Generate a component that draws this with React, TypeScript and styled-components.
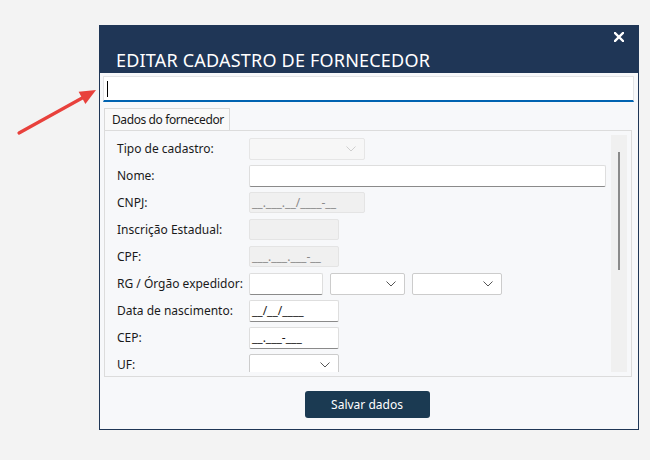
import React from "react";
import styled, { createGlobalStyle } from "styled-components";

const GlobalStyle = createGlobalStyle`
  html, body {
    margin: 0;
    padding: 0;
    background: #f3f3f3;
  }
  body {
    font-family: "Noto Sans", "Open Sans", sans-serif;
    color: #1a1a1a;
  }
`;

const Chevron = () => (
  <svg width="10" height="6" viewBox="0 0 10 6">
    <path d="M0.5 0.5 L5 5 L9.5 0.5" fill="none" stroke="currentColor" strokeWidth="1" />
  </svg>
);

const CloseIcon = () => (
  <svg width="10" height="10" viewBox="0 0 10 10">
    <path d="M1 1 L9 9 M9 1 L1 9" stroke="#ffffff" strokeWidth="2.4" strokeLinecap="square" />
  </svg>
);

const Select = ({ width, disabled }: { width: number; disabled?: boolean }) => (
  <SelectBox $width={width} $disabled={disabled}>
    <Chevron />
  </SelectBox>
);

const App = () => {
  return (
    <Page>
      <GlobalStyle />
      <Arrow width="110" height="150" viewBox="0 0 110 150">
        <line x1="19" y1="133" x2="84" y2="97" stroke="#e8413c" strokeWidth="3.2" strokeLinecap="round" />
        <polygon points="96,90 85.4,104 78.6,91.7" fill="#e8413c" />
      </Arrow>
      <Window>
        <Header>
          <Title>EDITAR CADASTRO DE FORNECEDOR</Title>
          <Close>
            <CloseIcon />
          </Close>
        </Header>
        <Body>
          <SearchInput>
            <Caret />
          </SearchInput>
          <TabBar>
            <Tab>Dados do fornecedor</Tab>
          </TabBar>
          <Panel>
            <ScrollArea>
              <Fields>
                <Row>
                  <Label>Tipo de cadastro:</Label>
                  <Select width={116} disabled />
                </Row>
                <Row>
                  <Label>Nome:</Label>
                  <TextBox $width={357} />
                </Row>
                <Row>
                  <Label>CNPJ:</Label>
                  <TextBox $width={116} $disabled>__.___.__/____-__</TextBox>
                </Row>
                <Row>
                  <Label>Inscrição Estadual:</Label>
                  <TextBox $width={90} $disabled />
                </Row>
                <Row>
                  <Label>CPF:</Label>
                  <TextBox $width={90} $disabled>___.___.___-__</TextBox>
                </Row>
                <Row>
                  <Label>RG / Órgão expedidor:</Label>
                  <Group>
                    <TextBox $width={74} />
                    <Select width={75} />
                    <Select width={90} />
                  </Group>
                </Row>
                <Row>
                  <Label>Data de nascimento:</Label>
                  <TextBox $width={90}>__/__/____</TextBox>
                </Row>
                <Row>
                  <Label>CEP:</Label>
                  <TextBox $width={90}>__.___-___</TextBox>
                </Row>
                <Row>
                  <Label>UF:</Label>
                  <Select width={90} />
                </Row>
              </Fields>
              <Scrollbar>
                <Thumb />
              </Scrollbar>
            </ScrollArea>
          </Panel>
          <Footer>
            <SaveButton>Salvar dados</SaveButton>
          </Footer>
        </Body>
      </Window>
    </Page>
  );
};

export default App;

const Page = styled.div`
  position: relative;
  width: 650px;
  height: 460px;
  padding: 25px 0 0 99px;
  box-sizing: border-box;
`;

const Arrow = styled.svg`
  position: absolute;
  left: 0;
  top: 0;
`;

const Window = styled.div`
  width: 540px;
  height: 405px;
  box-sizing: border-box;
  border: 1px solid #1f3656;
  border-top: none;
  background: #f7f8fa;
  display: flex;
  flex-direction: column;
`;

const Header = styled.div`
  position: relative;
  height: 48px;
  margin: 0 -1px;
  background: #1f3656;
  display: flex;
  align-items: flex-end;
  padding: 0 0 1px 17px;
  box-sizing: border-box;
`;

const Title = styled.div`
  color: #ffffff;
  font-size: 18px;
  line-height: 24px;
  letter-spacing: 0.2px;
`;

const Close = styled.div`
  position: absolute;
  top: 7px;
  right: 15px;
  display: flex;
`;

const Body = styled.div`
  flex: 1;
  display: flex;
  flex-direction: column;
  padding: 3px 4px 0 3px;
`;

const SearchInput = styled.div`
  height: 26px;
  box-sizing: border-box;
  background: #ffffff;
  border: 1px solid #e3e4e6;
  border-bottom: 2px solid #0063b1;
  display: flex;
  align-items: center;
  padding-left: 3px;
`;

const Caret = styled.div`
  width: 1px;
  height: 16px;
  background: #000000;
`;

const TabBar = styled.div`
  display: flex;
  margin: 6px 0 0 1px;
`;

const Tab = styled.div`
  width: 126px;
  height: 22px;
  box-sizing: border-box;
  padding: 0 0 0 7px;
  border: 1px solid #d9d9d9;
  border-bottom: none;
  background: #f9f9f9;
  font-size: 12px;
  line-height: 21px;
  letter-spacing: -0.4px;
  color: #1a1a1a;
  white-space: nowrap;
`;

const Panel = styled.div`
  height: 247px;
  margin: 0 2px 0 1px;
  box-sizing: border-box;
  border: 1px solid #dcdcdc;
  padding: 4px 4px 4px 3px;
`;

const ScrollArea = styled.div`
  height: 237px;
  display: flex;
  overflow: hidden;
`;

const Fields = styled.div`
  flex: 1;
  display: flex;
  flex-direction: column;
  padding-left: 9px;
`;

const Row = styled.div`
  height: 27px;
  flex-shrink: 0;
  display: flex;
  align-items: center;
`;

const Label = styled.div`
  width: 132px;
  font-size: 12px;
  color: #1a1a1a;
`;

const Group = styled.div`
  display: flex;
  gap: 7px;
`;

const TextBox = styled.div<{ $width: number; $disabled?: boolean }>`
  width: ${(p) => p.$width}px;
  height: ${(p) => (p.$disabled ? 21 : 22)}px;
  box-sizing: border-box;
  background: ${(p) => (p.$disabled ? "#f0f0f0" : "#ffffff")};
  border: 1px solid ${(p) => (p.$disabled ? "#e4e4e4" : "#dedede")};
  border-bottom-color: ${(p) => (p.$disabled ? "#e4e4e4" : "#8a8a8a")};
  border-radius: 2px;
  padding: 0 0 0 2px;
  font-size: 12px;
  line-height: 19px;
  color: ${(p) => (p.$disabled ? "#8a8a8a" : "#1a1a1a")};
  white-space: nowrap;
  overflow: hidden;
`;

const SelectBox = styled.div<{ $width: number; $disabled?: boolean }>`
  width: ${(p) => p.$width}px;
  height: 22px;
  box-sizing: border-box;
  background: ${(p) => (p.$disabled ? "#f7f7f7" : "#ffffff")};
  border: 1px solid ${(p) => (p.$disabled ? "#e6e6e6" : "#cccccc")};
  border-radius: 2px;
  display: flex;
  align-items: center;
  justify-content: flex-end;
  padding-right: 8px;
  color: ${(p) => (p.$disabled ? "#cfcfcf" : "#555555")};
`;

const Scrollbar = styled.div`
  width: 16px;
  margin-left: 5px;
  background: #f0f0f0;
  display: flex;
  justify-content: center;
  padding-top: 17px;
  box-sizing: border-box;
`;

const Thumb = styled.div`
  width: 2px;
  height: 118px;
  background: #8a8a8a;
`;

const Footer = styled.div`
  display: flex;
  justify-content: center;
  padding-top: 14px;
  padding-right: 3px;
`;

const SaveButton = styled.button`
  width: 125px;
  height: 27px;
  border: none;
  border-radius: 3px;
  background: #1b3a52;
  color: #ffffff;
  font-family: "Noto Sans", "Open Sans", sans-serif;
  font-size: 12px;
  padding: 0;
`;
